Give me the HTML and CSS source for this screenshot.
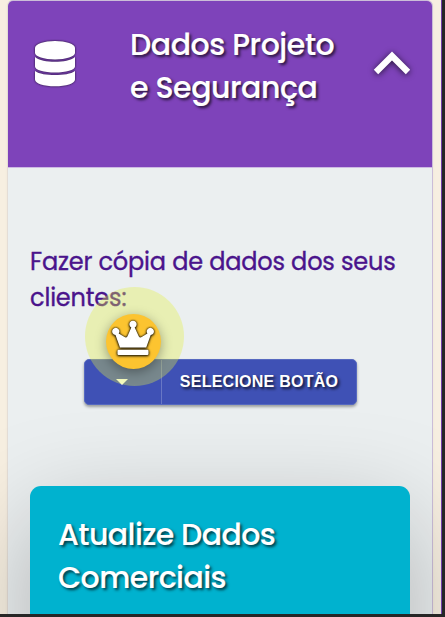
FILE: index.html
```html
<!DOCTYPE html>
<html lang="pt-BR">
<head>
<meta charset="utf-8">
<title>Dados Projeto e Segurança</title>
<link rel="stylesheet" href="styles.css">
</head>
<body>
<main class="screen">
  <section class="card">
    <header class="card-header">
      <svg class="db-icon" viewBox="0 0 42 48">
        <path d="M1 8C1 4 10 1 21 1s20 3 20 7v5c0 3.500-9 6.500-20 6.500S1 16.500 1 13z"/>
        <path d="M1 17c4 3.500 12 4.700 20 4.700s16-1.200 20-4.700v9.500c0 3.500-9 6-20 6s-20-2.500-20-6z"/>
        <path d="M1 31c4 3 12 4 20 4s16-1 20-4v8.500c0 4-9 6.800-20 6.800S1 43.500 1 39.500z"/>
      </svg>
      <h1 class="title">Dados Projeto<br>e Segurança</h1>
      <svg class="chevron" viewBox="0 0 38 24"><path d="M3 21 19 5l16 16"/></svg>
    </header>
    <div class="card-body">
      <p class="label">Fazer cópia de dados dos seus<br>clientes:</p>
      <div class="split-button">
        <button class="toggle" aria-label="Opções">
          <span class="caret"></span>
        </button>
        <button class="action">SELECIONE BOTÃO</button>
        <div class="halo"></div>
        <div class="crown-badge">
          <svg class="crown" viewBox="0 0 44 37">
            <path d="M9 27.500 4.500 15a3.600 3.600 0 1 1 3.200-1.500l5.800 3.600c1.200.7 2.300.4 3-.8L20.300 7.500a3.600 3.600 0 1 1 3.400 0l4 8.800c.7 1.200 1.800 1.500 3 .8l5.700-3.600a3.600 3.600 0 1 1 3.300 1.500L35.200 27.500z"/>
            <rect x="6.500" y="29.700" width="31" height="5.300" rx="1.200"/>
          </svg>
        </div>
      </div>
      <section class="promo">
        <h2 class="promo-title">Atualize Dados<br>Comerciais</h2>
      </section>
    </div>
  </section>
</main>
</body>
</html>
```
FILE: styles.css
```css
* { box-sizing: border-box; }
body {
  margin: 0;
  height: 617px;
  overflow: hidden;
  background: #262626;
  font-family: Poppins, Inter, sans-serif;
}
.screen {
  width: 442px;
  height: 614px;
  padding: 0 9px 0 7px;
  overflow: hidden;
  background: #f7efe1;
  border-right: 1px solid #7240aa;
}
.card {
  width: 426px;
  height: 660px;
  border: 1px solid #cbbdd8;
  border-left-color: #e4ddd6;
  border-radius: 6px;
  background: #ebeff0;
  box-shadow: 0 1px 3px rgba(0, 0, 0, .04);
}
.card-header {
  display: flex;
  align-items: flex-start;
  height: 167px;
  padding: 22px 21px 0 26px;
  background: #7e43ba;
  border-bottom: 1px solid #cdb9e3;
  border-radius: 5px 5px 0 0;
}
.db-icon {
  width: 42px;
  height: 48px;
  margin-top: 17px;
  fill: #fff;
  filter: drop-shadow(0 0 1px rgba(0, 0, 0, .8));
}
.title, .promo-title {
  margin: 0;
  color: #fff;
  font-size: 30px;
  font-weight: 500;
  line-height: 43px;
  letter-spacing: -.58px;
  white-space: nowrap;
  text-shadow: 2px 2px 3px rgba(0, 0, 0, .7);
  -webkit-text-stroke: .15px #fff;
}
.title {
  flex: 1;
  margin-left: 54px;
  letter-spacing: -.45px;
}
.chevron {
  width: 38px;
  height: 24px;
  margin-top: 28px;
  overflow: visible;
  fill: none;
  stroke: #fff;
  stroke-width: 6.2;
  filter: drop-shadow(0 1px 3px rgba(0, 0, 0, .7));
}
.card-body { padding: 76px 22px 0; }
.label {
  margin: 0;
  color: #4a148c;
  font-size: 24px;
  line-height: 36px;
  letter-spacing: -.17px;
  white-space: nowrap;
  -webkit-text-stroke: .35px #4a148c;
}
.split-button {
  position: relative;
  display: flex;
  width: 273px;
  height: 46px;
  margin: 43px 0 0 54px;
  border: 1px solid #5669c0;
  border-radius: 5px;
  background: #3f51b5;
  box-shadow: 0 2px 3px rgba(0, 0, 0, .35);
}
.toggle, .action {
  padding: 0;
  border: 0;
  background: none;
  color: #fff;
}
.toggle {
  display: flex;
  justify-content: center;
  width: 77px;
  border-right: 1px solid #6977c5;
}
.caret {
  margin: 19px 2px 0 0;
  border: 6px solid transparent;
  border-top-color: #fff;
  border-bottom: 0;
}
.action {
  flex: 1;
  font: bold 16px/1 "Liberation Sans", Arial, sans-serif;
  letter-spacing: .25px;
  white-space: nowrap;
  text-shadow: 2px 2px 3px rgba(0, 0, 0, .75);
}
.halo {
  position: absolute;
  left: 0;
  top: -73px;
  width: 99px;
  height: 99px;
  border-radius: 50%;
  background: rgba(225, 240, 65, .35);
}
.crown-badge {
  position: absolute;
  left: 21px;
  top: -46px;
  display: flex;
  justify-content: center;
  width: 55px;
  height: 55px;
  padding-top: 6px;
  border-radius: 50%;
  background: #fcc430;
  box-shadow: 0 3px 12px rgba(0, 0, 0, .35);
}
.crown {
  width: 44px;
  height: 37px;
  margin-left: -1px;
  overflow: visible;
  fill: #fff;
  filter: drop-shadow(0 0 1px #000) drop-shadow(0 1px 1px rgba(0, 0, 0, .7));
}
.promo {
  width: 380px;
  height: 174px;
  margin-top: 81px;
  padding: 27px 0 0 28px;
  border-radius: 11px;
  background: #00b2cf;
  box-shadow: 0 34px 105px rgba(0, 0, 0, .27);
}
```
